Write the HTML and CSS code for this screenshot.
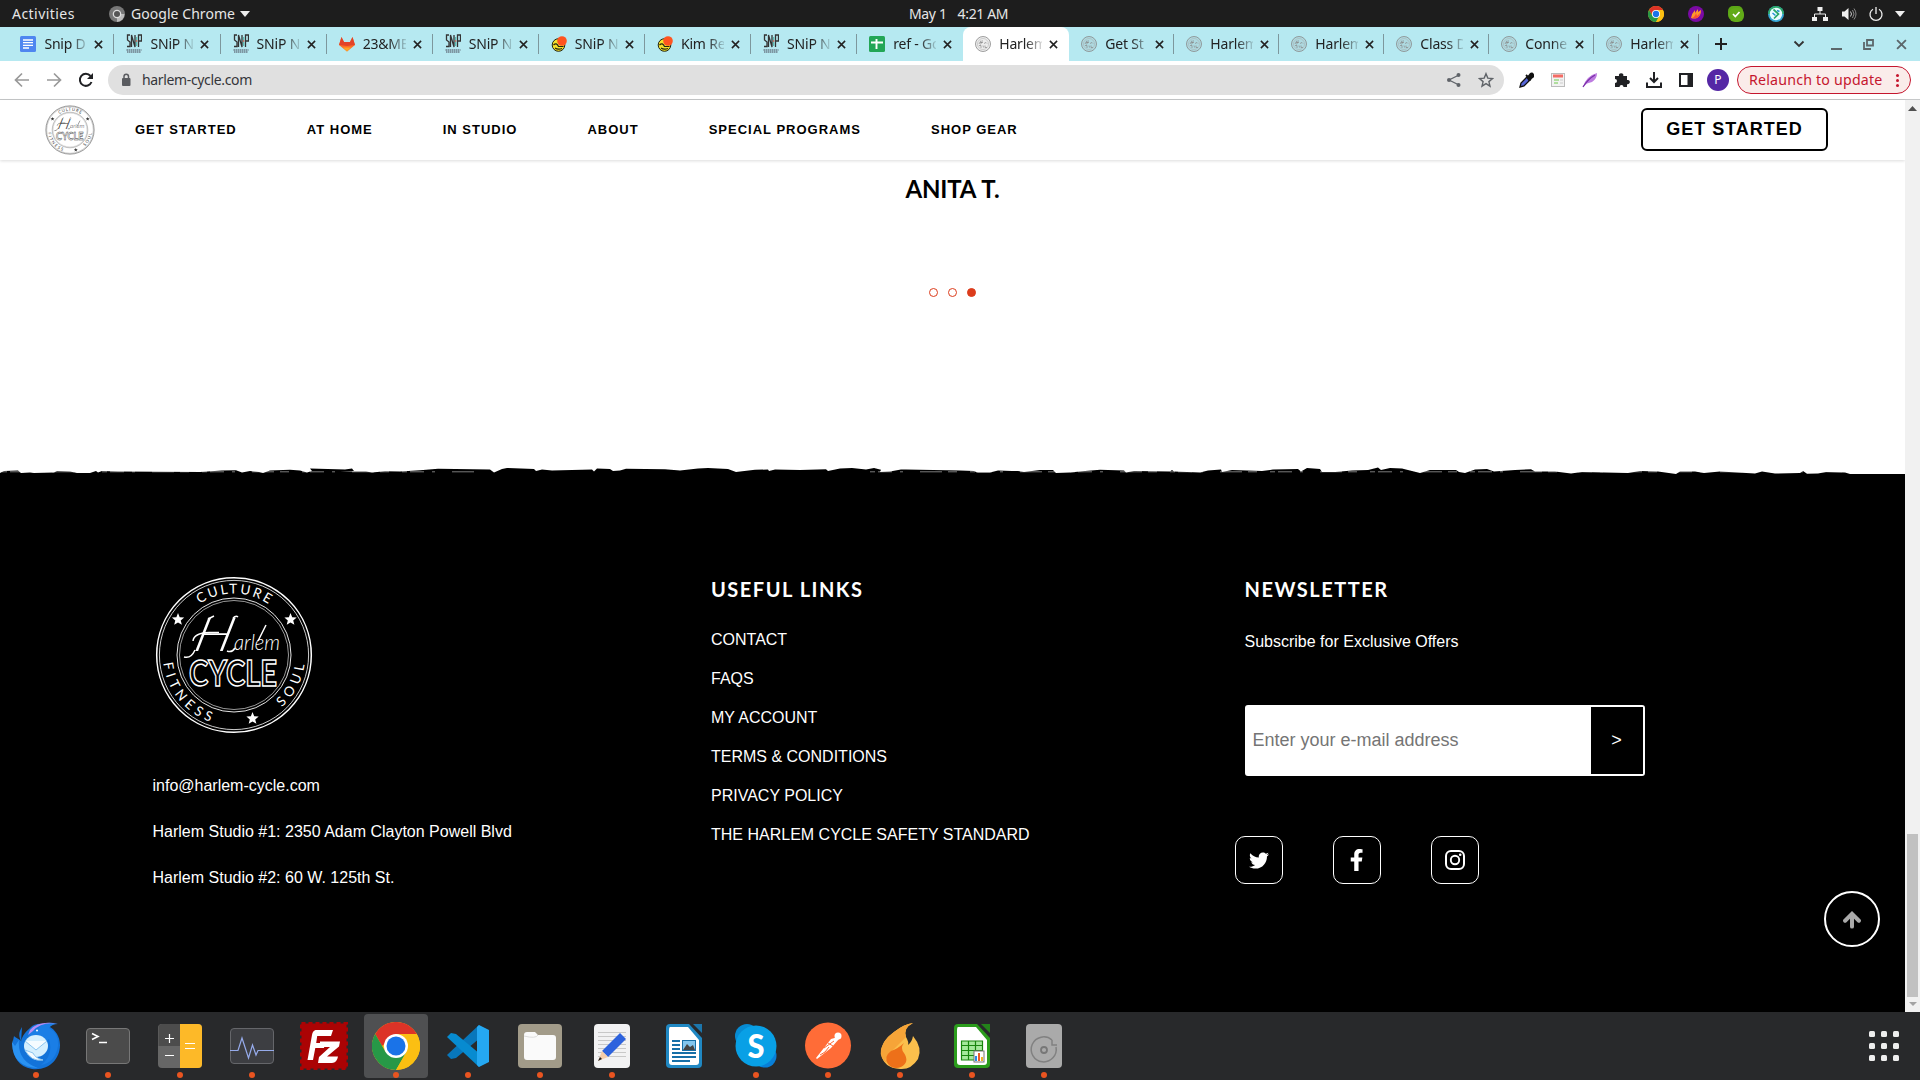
FILE: index.html
```html
<!DOCTYPE html>
<html lang="en">
<head>
<meta charset="utf-8">
<title>Harlem Cycle</title>
<link rel="stylesheet" href="styles.css">
</head>
<body>
<svg class="defs" width="0" height="0" aria-hidden="true">
  <defs>
    <symbol id="logo" viewBox="0 0 160 160">
      <g fill="none" stroke="currentColor">
        <circle cx="80" cy="80" r="77.3" stroke-width="1.5"/>
        <circle cx="80" cy="80" r="74.6" stroke-width=".8"/>
        <circle cx="80" cy="80" r="57" stroke-width=".9"/>
        <circle cx="80" cy="80" r="54.5" stroke-width=".6"/>
      </g>
      <path id="arc-top" d="M18.500 80A61.500 61.500 0 0 1 141.500 80" fill="none"/>
      <path id="arc-low" d="M9 80A71 71 0 0 0 151 80" fill="none"/>
      <g fill="currentColor" font-family="Lato, sans-serif" font-weight="400" font-size="13.500">
        <text textLength="73" lengthAdjust="spacing"><textPath href="#arc-top" startOffset="60">CULTURE</textPath></text>
        <text textLength="79" lengthAdjust="spacing"><textPath href="#arc-low" startOffset="8">FITNESS</textPath></text>
        <text textLength="49" lengthAdjust="spacing"><textPath href="#arc-low" startOffset="164">SOUL</textPath></text>
      </g>
      <g fill="currentColor">
        <path id="star" d="M24 38l1.700 4.200 4.500.300-3.500 2.900 1.200 4.400-3.900-2.400-3.800 2.400 1.100-4.400-3.400-2.900 4.500-.300z"/>
        <use href="#star" x="112.500" y="0"/>
        <use href="#star" x="74.500" y="99"/>
      </g>
      <g fill="currentColor" font-family="Lato, sans-serif" font-style="italic">
        <g transform="translate(38 76) skewX(-14)"><text font-size="47" font-weight="300" textLength="38" lengthAdjust="spacingAndGlyphs">H</text></g>
        <text x="80" y="75" font-size="21" font-weight="300" textLength="46" lengthAdjust="spacingAndGlyphs">arlem</text>
      </g>
      <path d="M39 66q1-8 16-8.500h10M41 75q-4 9-11 7M54 44l6-3M73 76q5 2 8-3M79 43q3-3 5-1M104 66L112 50" fill="none" stroke="currentColor" stroke-width="1.500"/>
      <text x="35" y="111" font-family="Lato, sans-serif" font-weight="700" font-size="36" textLength="88" lengthAdjust="spacingAndGlyphs" fill="none" stroke="currentColor" stroke-width="1.500">CYCLE</text>
    </symbol>
    <symbol id="hc" viewBox="0 0 16 16">
      <circle cx="8" cy="8" r="7.500" fill="#888" fill-opacity=".15" stroke="#888" stroke-width=".800"/>
      <circle cx="8" cy="8" r="5.500" fill="none" stroke="#aaa" stroke-width=".500"/>
      <path d="M4 8l2-3.500M5.500 8.500l2-4M5 6.500h3M9 7.500l2-1 1 1M4 9.500h2v2.500M8 9.500l.500 2M10 9.500v2h2" stroke="#888" stroke-width=".700" fill="none"/>
    </symbol>
    <symbol id="snip" viewBox="0 0 16 20">
      <path d="M4 1H1.500v5L4 8v4.500H1M5.500 13V1L9 13V1M12.500 13V1h3v6h-3" fill="none" stroke="#333" stroke-width="1.300"/>
      <path d="M10.700 3v9" stroke="#46b3a4" stroke-width="1"/><path d="M10.700 6v2" stroke="#d65" stroke-width="1"/>
      <path d="M.500 16h15M1 18h14" stroke="#445" stroke-width="1.100" stroke-dasharray="1.500 .500"/>
    </symbol>
    <symbol id="face" viewBox="0 0 16 16">
      <circle cx="7.500" cy="9" r="6.300" fill="#f4e22b" stroke="#221" stroke-width="1"/>
      <path d="M2.500 9q3-3 5 1.500h5M4 12q3 2 7 .500" fill="none" stroke="#221" stroke-width="1.200"/>
      <circle cx="11" cy="5" r="4.800" fill="#ff5420"/>
    </symbol>
    <symbol id="x" viewBox="0 0 10 10"><path d="M1 1l8 8M9 1L1 9" stroke="currentColor" stroke-width="1.700"/></symbol>
    <symbol id="chrome" viewBox="0 0 48 48">
      <circle cx="24" cy="24" r="24" fill="#fbbf12"/>
      <path d="M24 12H44.800A24 24 0 0 0 3.200 12L10 24z" fill="#dc3327"/>
      <path d="M3.200 12A24 24 0 0 0 24 48L34.400 30 24 34 13.600 30z" fill="#279847"/>
      <path d="M24 48A24 24 0 0 0 44.800 12H24l10.400 18z" fill="#fbbf12"/>
      <circle cx="24" cy="24" r="12" fill="#fff"/><circle cx="24" cy="24" r="9.500" fill="#1a73e8"/>
    </symbol>
  </defs>
</svg>

<div class="desktop">
  <header class="topbar">
    <div class="topbar-left">
      <span class="activities">Activities</span>
      <svg class="app-icon" viewBox="0 0 16 16"><circle cx="8" cy="8" r="8" fill="#777"/><path d="M8 8h7.500A8 8 0 0 1 8 16z" fill="#bbb"/><circle cx="8" cy="8" r="4.300" fill="#ddd"/><circle cx="8" cy="8" r="3" fill="#555"/></svg>
      <span class="app-name">Google Chrome</span>
      <svg class="caret" viewBox="0 0 10 6"><path d="M0 0h10L5 6z" fill="#eee"/></svg>
    </div>
    <div class="clock"><span>May 1</span><span>4:21 AM</span></div>
    <div class="tray">
      <svg class="tray-app" viewBox="0 0 16 16"><use href="#chrome"/></svg>
      <svg class="tray-app" viewBox="0 0 16 16"><circle cx="8" cy="8" r="8" fill="#7b0aa5"/><path d="M3 12q1-5 4-8l0 3 3-4v3l3-2q0 6-4 8-3 1-6 0z" fill="#ff9b2b"/><path d="M4 12q3-1 4-5l1 3 3-3q-1 5-4 5z" fill="#ff4b38"/></svg>
      <svg class="tray-app" viewBox="0 0 16 16"><rect width="15" height="14" rx="5" fill="#5ba616"/><rect x="1" y="2" width="15" height="14" rx="6" fill="#62ab18"/><path d="M5 8l2.300 2.500L11.500 6" fill="none" stroke="#fff" stroke-width="1.700"/></svg>
      <svg class="tray-app" viewBox="0 0 16 16"><circle cx="8" cy="8" r="8" fill="#35a6d6"/><path d="M0 8a8 8 0 0 1 16 0z" fill="#2aa768"/><circle cx="8" cy="8" r="6.200" fill="#e9fbff"/><path d="M5.500 3.500l5 4.500-4.500 4.500" stroke="#2aa768" stroke-width="1.700" fill="none"/><path d="M4.500 7l3 2.500M9 4.500l2.500 1" stroke="#2591d5" stroke-width="1.500" fill="none"/></svg>
      <svg class="net" viewBox="0 0 16 16"><path d="M5.500 1h5v4h-5zM0 11h5v4H0zM11 11h5v4h-5z" fill="#eee"/><path d="M8 4v4M2.500 11V8h11v3" fill="none" stroke="#eee"/></svg>
      <svg class="vol" viewBox="0 0 16 16"><path d="M1 5.500h2.500L7.500 2v12l-4-3.500H1z" fill="#eee"/><path d="M9.500 5.500q2 2.500 0 5" fill="none" stroke="#ccc"/><path d="M11.500 4q3 4 0 8M13 2.500q4 5.500 0 11" fill="none" stroke="#888"/></svg>
      <svg class="power" viewBox="0 0 16 16"><path d="M5 3.200a6 6 0 1 0 6 0M8 1v7" fill="none" stroke="#eee" stroke-width="1.300"/></svg>
      <svg class="caret" viewBox="0 0 10 6"><path d="M0 0h10L5 6z" fill="#eee"/></svg>
    </div>
  </header>

  <div class="tabstrip">
    <div class="tab"><svg class="fav" viewBox="0 0 16 16"><rect width="16" height="16" rx="1.500" fill="#4f86f0"/><path d="M3 4h10M3 6.700h10M3 9.400h10M3 12h6" stroke="#fff" stroke-width="1.300"/></svg><span class="label">Snip D</span><svg class="close"><use href="#x"/></svg></div>
    <div class="tab"><svg class="fav tall"><use href="#snip"/></svg><span class="label">SNiP N</span><svg class="close"><use href="#x"/></svg></div>
    <div class="tab"><svg class="fav tall"><use href="#snip"/></svg><span class="label">SNiP N</span><svg class="close"><use href="#x"/></svg></div>
    <div class="tab"><svg class="fav" viewBox="0 0 16 16"><path d="M0 9L2.500 1l2.500 5h6l2.500-5L16 9l-8 6.500z" fill="#fc6d26"/><path d="M0 9L2.500 1l2.500 5h6l2.500-5L16 9 8 10z" fill="#e24329"/><path d="M4 11.500h8l-4 4z" fill="#fca326"/></svg><span class="label">23&amp;ME</span><svg class="close"><use href="#x"/></svg></div>
    <div class="tab"><svg class="fav tall"><use href="#snip"/></svg><span class="label">SNiP N</span><svg class="close"><use href="#x"/></svg></div>
    <div class="tab"><svg class="fav"><use href="#face"/></svg><span class="label">SNiP N</span><svg class="close"><use href="#x"/></svg></div>
    <div class="tab"><svg class="fav"><use href="#face"/></svg><span class="label">Kim Re</span><svg class="close"><use href="#x"/></svg></div>
    <div class="tab"><svg class="fav tall"><use href="#snip"/></svg><span class="label">SNiP N</span><svg class="close"><use href="#x"/></svg></div>
    <div class="tab before-active"><svg class="fav" viewBox="0 0 16 16"><rect width="16" height="16" rx="1.500" fill="#23a656"/><path d="M2 6.500h12M7.500 3v10" stroke="#fff" stroke-width="1.900"/></svg><span class="label">ref - Go</span><svg class="close"><use href="#x"/></svg></div>
    <div class="tab active"><svg class="fav"><use href="#hc"/></svg><span class="label">Harlem</span><svg class="close"><use href="#x"/></svg></div>
    <div class="tab narrow"><svg class="fav"><use href="#hc"/></svg><span class="label">Get St</span><svg class="close"><use href="#x"/></svg></div>
    <div class="tab narrow"><svg class="fav"><use href="#hc"/></svg><span class="label">Harlem</span><svg class="close"><use href="#x"/></svg></div>
    <div class="tab narrow"><svg class="fav"><use href="#hc"/></svg><span class="label">Harlem</span><svg class="close"><use href="#x"/></svg></div>
    <div class="tab narrow"><svg class="fav"><use href="#hc"/></svg><span class="label">Class D</span><svg class="close"><use href="#x"/></svg></div>
    <div class="tab narrow"><svg class="fav"><use href="#hc"/></svg><span class="label">Conne</span><svg class="close"><use href="#x"/></svg></div>
    <div class="tab narrow"><svg class="fav"><use href="#hc"/></svg><span class="label">Harlem</span><svg class="close"><use href="#x"/></svg></div>
    <svg class="newtab" viewBox="0 0 12 12"><path d="M6 0v12M0 6h12" stroke="#222" stroke-width="2"/></svg>
    <div class="winctl">
      <svg width="12" height="8" viewBox="0 0 12 8"><path d="M1.500 1.500L6 6l4.500-4.500" fill="none" stroke="#333" stroke-width="1.800"/></svg>
      <svg width="11" height="12" viewBox="0 0 11 12"><path d="M0 11h11" stroke="#5c676b" stroke-width="2"/></svg>
      <svg width="11" height="11" viewBox="0 0 11 11"><path d="M4 1h6v5.500H4zM1 3v7h7" fill="none" stroke="#5c676b" stroke-width="1.800"/></svg>
      <svg width="11" height="11" viewBox="0 0 10 10" color="#5c676b"><use href="#x"/></svg>
    </div>
  </div>

  <div class="toolbar">
    <div class="navbtns">
      <svg viewBox="0 0 16 16"><path d="M15 8H2M8 1.500L1.500 8 8 14.500" fill="none" stroke="#999" stroke-width="1.700"/></svg>
      <svg viewBox="0 0 16 16"><path d="M1 8h13M8 1.500L14.500 8 8 14.500" fill="none" stroke="#999" stroke-width="1.700"/></svg>
      <svg viewBox="0 0 16 16"><path d="M13.500 10A6 6 0 1 1 12.500 4" fill="none" stroke="#202124" stroke-width="2"/><path d="M15 1v6H9z" fill="#202124"/></svg>
    </div>
    <div class="omnibox">
      <svg class="lock" viewBox="0 0 10 14"><rect x="1" y="5" width="8.500" height="8" rx="1" fill="#5a5c60"/><path d="M3 6V3.500a2.200 2.200 0 0 1 4.500 0V6" fill="none" stroke="#5a5c60" stroke-width="1.500"/></svg>
      <span class="url">harlem-cycle.com</span>
      <svg class="omni-icon" viewBox="0 0 16 16"><path d="M13 3L3 8l10 5" fill="none" stroke="#5f6368" stroke-width="1.300"/><circle cx="12.500" cy="3" r="2" fill="#5f6368"/><circle cx="3" cy="8" r="2" fill="#5f6368"/><circle cx="12.500" cy="13" r="2" fill="#5f6368"/></svg>
      <svg class="omni-icon" viewBox="0 0 16 16"><path d="M8 1.700l1.800 4.400 4.700.400-3.600 3.100 1.100 4.600L8 11.700l-4 2.500 1.100-4.600L1.500 6.500l4.700-.400z" fill="none" stroke="#5f6368" stroke-width="1.400"/></svg>
    </div>
    <div class="exts">
      <svg viewBox="0 0 16 16"><path d="M2 15l1-4 6-6 3 3-6 6z" fill="#5666d8" stroke="#111" stroke-width="1.300"/><path d="M8 3l5 5M9.500 5.500L12 2.500q2-2 3 0t-1 3l-3 2.500z" fill="#111" stroke="#111" stroke-width="1.800"/></svg>
      <svg viewBox="0 0 16 16"><rect x="1.500" y="1.500" width="13" height="13" fill="#f2f2f2" stroke="#bbb"/><path d="M3 4h10" stroke="#f36c65" stroke-width="3"/><path d="M4 8h5M4 11h4" stroke="#9bd883" stroke-width="1.300"/><path d="M10 8h3M10 11h3" stroke="#ccc"/></svg>
      <svg viewBox="0 0 16 16"><path d="M1 15Q4 4 15 1q0 6-5 9l-5 1.500z" fill="#bd7ce0"/><path d="M1 15Q6 7 13 3" fill="none" stroke="#7b2fa8" stroke-width="1.300"/></svg>
      <svg viewBox="0 0 16 16"><path d="M1 4h4a2.200 2.200 0 1 1 4.300 0H13v4a2.200 2.200 0 1 1 0 4.200V15H9.500a2 2 0 0 0-4 0H1v-4a2 2 0 0 0 0-4z" fill="#202124"/></svg>
      <svg viewBox="0 0 16 16"><path d="M8 0v9M4 6l4 4 4-4M1 10.500V15h14v-4.500" fill="none" stroke="#202124" stroke-width="2"/></svg>
      <svg viewBox="0 0 16 16"><path d="M2 2h12v12H2z" fill="none" stroke="#202124" stroke-width="2"/><path d="M9.500 2h4v12h-4z" fill="#202124"/></svg>
      <span class="avatar">P</span>
    </div>
    <div class="relaunch"><span>Relaunch to update</span><i class="kebab"></i></div>
  </div>

  <div class="viewport">
    <div class="page">
      <nav class="site-nav">
        <svg class="nav-logo"><use href="#logo"/></svg>
        <div class="nav-links"><a>GET STARTED</a><a>AT HOME</a><a>IN STUDIO</a><a>ABOUT</a><a>SPECIAL PROGRAMS</a><a>SHOP GEAR</a></div>
        <a class="cta">GET STARTED</a>
      </nav>
      <section class="testimonial">
        <h3>ANITA T.</h3>
        <div class="dots"><i></i><i></i><i class="on"></i></div>
      </section>
      <svg class="torn" viewBox="0 0 1905 10" preserveAspectRatio="none"><path d="M0 10V7L4 5 18 4.500 21 7 30 6.500 34 7 54 6.500 57 5 70 5.500 77 7 90 7 96 5 98 6.500 102 5 118 5.500 200 6 222 4.500 236 4.200 242 6.500 250 5 259 6 263 7 270 4.500 290 3.800 300 4.500 307 6.500 312 5 310 2.500 345 3.500 352 2.500 354 5 340 5.500 366 5.500 372 6.500 385 5.300 400 5.500 420 4.200 438 2.800 490 3.500 494 6.500 502 3 507 2 534 3 536 5 542 3.500 552 4.500 592 3.500 594 5.500 597 2.500 610 3 613 5 620 4.500 626 2.700 665 3.200 680 4.500 698 2.500 708 2 728 3 736 6 755 3.800 768 3.500 769 5 775 3.500 800 4 826 3.300 828 5 840 2.500 852 2 866 3.500 874 2 881 3.700 880 6 890 5.500 901 3.500 906 3.500 960 4.500 974 5 977 6.500 990 6.500 998 4.500 1012 5 1018 5 1024 6 1040 4 1053 4 1056 7 1070 6.500 1085 5 1100 3.800 1124 4.500 1126 6.500 1134 5 1170 5.500 1172 4 1174 5.500 1200 6.500 1208 4.500 1221 3.500 1222 6 1232 4 1262 5 1273 3.500 1298 3 1301 5.500 1307 2 1320 3 1322 6 1335 6 1352 4.500 1368 4 1378 1.500 1381 4 1390 2 1402 2.500 1408 4 1420 7 1430 4 1456 4 1459 6 1465 7 1475 3.500 1487 3 1494 5.500 1515 4 1531 3.300 1535 5.500 1555 5.500 1571 7.500 1582 6 1628 7 1640 5 1658 5.500 1676 8 1680 5.500 1695 5.500 1704 7 1720 5.500 1755 7.500 1762 5.500 1775 7.500 1800 7 1803 5 1807 7.800 1818 7.600 1826 6 1845 6.500 1850 8 1905 8V10z"/><path d="M2 5.800H480M870 5.800H1850" fill="none" stroke="#fff" stroke-opacity=".6" stroke-width=".8" stroke-dasharray="5 3 14 8 3 17 22 6 9 13"/></svg>
      <footer class="site-footer">
        <div class="col about">
          <svg class="foot-logo"><use href="#logo"/></svg>
          <p>info@harlem-cycle.com</p>
          <p>Harlem Studio #1: 2350 Adam Clayton Powell Blvd</p>
          <p>Harlem Studio #2: 60 W. 125th St.</p>
        </div>
        <div class="col links">
          <h4>USEFUL LINKS</h4>
          <a>CONTACT</a><a>FAQS</a><a>MY ACCOUNT</a><a>TERMS &amp; CONDITIONS</a><a>PRIVACY POLICY</a><a>THE HARLEM CYCLE SAFETY STANDARD</a>
        </div>
        <div class="col news">
          <h4>NEWSLETTER</h4>
          <p>Subscribe for Exclusive Offers</p>
          <form class="signup"><input type="text" placeholder="Enter your e-mail address"><button type="button">&gt;</button></form>
          <div class="social">
            <a><svg width="20" height="17" viewBox="0 48 512 416"><path d="M459.370 151.716c.325 4.548.325 9.097.325 13.645 0 138.720-105.583 298.558-298.558 298.558-59.452 0-114.680-17.219-161.137-47.106 8.447.974 16.568 1.299 25.340 1.299 49.055 0 94.213-16.568 130.274-44.832-46.132-.975-84.792-31.188-98.112-72.772 6.498.974 12.995 1.624 19.818 1.624 9.421 0 18.843-1.300 27.614-3.573-48.081-9.747-84.143-51.980-84.143-102.985v-1.299c13.969 7.797 30.214 12.670 47.431 13.319-28.264-18.843-46.781-51.005-46.781-87.391 0-19.492 5.197-37.360 14.294-52.954 51.655 63.675 129.300 105.258 216.365 109.807-1.624-7.797-2.599-15.918-2.599-24.040 0-57.828 46.782-104.934 104.934-104.934 30.213 0 57.502 12.670 76.670 33.137 23.715-4.548 46.456-13.320 66.599-25.340-7.798 24.366-24.366 44.833-46.132 57.827 21.117-2.273 41.584-8.122 60.426-16.243-14.292 20.791-32.161 39.308-52.628 54.253z" fill="#fff"/></svg></a>
            <a><svg width="13" height="22" viewBox="22 0 270 512"><path d="M279.140 288l14.220-92.660h-88.910v-60.130c0-25.350 12.420-50.060 52.240-50.060h40.420V6.260S260.430 0 225.360 0c-73.220 0-121.080 44.380-121.080 124.720v70.620H22.890V288h81.390v224h100.170V288z" fill="#fff"/></svg></a>
            <a><svg width="20" height="20" viewBox="0 0 20 20"><rect x="1" y="1" width="18" height="18" rx="5" fill="none" stroke="#fff" stroke-width="2"/><circle cx="10" cy="10" r="4.200" fill="none" stroke="#fff" stroke-width="1.900"/><circle cx="15.200" cy="4.800" r="1.300" fill="#fff"/></svg></a>
          </div>
        </div>
        <a class="to-top"><svg width="18" height="18" viewBox="0 0 19 18"><path d="M9.500 16V3M2.200 9.800L9.500 2.500l7.300 7.300" fill="none" stroke="#aaa" stroke-width="4.200" stroke-linecap="round"/></svg></a>
      </footer>
    </div>
    <div class="scrollbar">
      <svg width="9" height="5" viewBox="0 0 9 5"><path d="M0 5h9L4.500 0z" fill="#505050"/></svg>
      <i class="thumb"></i>
      <svg width="8" height="4" viewBox="0 0 8 4"><path d="M0 0h8L4 4z" fill="#a3a3a3"/></svg>
    </div>
  </div>

  <div class="dock">
    <div class="app run"><svg viewBox="0 0 48 48"><path d="M10 5c-4 6-3 10-1 14-3-3-5-3-7-5-4 14 1 30 18 33 17 2 28-10 28-24 0-9-5-15-10-18-4-4-15-5-20 1-6 5-9 10-9 15z" fill="#1373d9"/><path d="M0 18q-1 27 26 28Q5 39 7 18l-4 6q-3-3-3-6z" fill="#2a92f2"/><path d="M26 7Q31-2 46 2q-6 0-9 4 10 5 9 18-3 17-17 19 13-10 8-26-5 5-14 4l-7-6q2-6 10-8z" fill="#1a7ee6"/><path d="M18 8Q27-2 46 2 30-1 21 9l-5 4z" fill="#b48df5"/><ellipse cx="24" cy="24" rx="12" ry="11" fill="#d5effe"/><path d="M13 19l11 9 11-9M13 28q6 12 18 10-8-2-10-7z" fill="#f5fbff" stroke="#8cc5ef" stroke-width="1"/><circle cx="25" cy="8.500" r="1" fill="#fff"/></svg></div>
    <div class="app run"><svg viewBox="0 0 48 48"><rect x="2.500" y="6.500" width="43" height="35" rx="3.500" fill="#4b4b4b" stroke="#777"/><path d="M8 11.500l6 3-6 3M15 20.500h8" fill="none" stroke="#fff" stroke-width="1.600"/></svg></div>
    <div class="app run"><svg viewBox="0 0 48 48"><rect x="2" y="2" width="44" height="44" rx="4" fill="#666"/><path d="M2.500 24V6a4 4 0 0 1 4-4H24v22z" fill="#4c4c4c"/><path d="M24 2h18a4 4 0 0 1 4 4v36a4 4 0 0 1-4 4H24z" fill="#fdb928"/><path d="M9 16.500h9M13.500 12v9M9 33.500h9M29 21.500h10M29 26.500h10" stroke="#fff" stroke-width="1.200"/></svg></div>
    <div class="app run"><svg viewBox="0 0 48 48"><rect x="2.500" y="6.500" width="43" height="35" rx="3.500" fill="#3d3e42" stroke="#65666a"/><path d="M2 28.500h8L14 16l6.500 20 4-13L28 33l2-4.500h16" fill="none" stroke="#96abeb" stroke-width="1.200"/></svg></div>
    <div class="app"><svg viewBox="0 0 48 48"><rect x="1.500" y="1.500" width="45" height="45" fill="#ab0304" stroke="#ab0304" stroke-width="3" stroke-dasharray="4 3"/><path d="M33 8H15.500q-3 1-3.500 5L7.500 38H13l2.300-12H24l1-5h-8.800l1-7H31z" fill="#fff"/><path d="M20 19.500h20l-1 5-12 10h11q-1 6-6 6.500H18l1-6 11-10H20z" fill="#fff"/></svg></div>
    <div class="app run current"><svg viewBox="0 0 48 48"><use href="#chrome"/></svg></div>
    <div class="app run"><svg viewBox="0 0 48 48"><path d="M35 3L3 33l4 4 5-1 24-20z" fill="#0877bb"/><path d="M35 45L3 15l4-4 5 1 24 20z" fill="#078bd0"/><path d="M35 3l10 5v32l-10 5-2-2V5z" fill="#25a8f2"/></svg></div>
    <div class="app run"><svg viewBox="0 0 48 48"><rect x="2" y="2" width="44" height="44" rx="4" fill="#a29b89"/><path d="M8 13q0-3 3-3h8l3 3h15q3 0 3 3v19q0 3-3 3H11q-3 0-3-3z" fill="#fafafa"/><path d="M8 14q12 3 14-1" fill="none" stroke="#ddd"/></svg></div>
    <div class="app run"><svg viewBox="0 0 48 48"><rect x="6" y="2" width="36" height="44" rx="4" fill="#f2f2f3"/><path d="M10 10.500h28M10 14.500h28M10 18.500h28M10 22.500h28M10 26.500h28M10 30.500h28M10 34.500h28" stroke="#c8c8c8"/><path d="M14 29L32 11l6 6-18 18z" fill="#2d62dd"/><path d="M14 29l6 6-10 4z" fill="#f5cdaa"/><path d="M12 35l-2 4 4-2z" fill="#222"/></svg></div>
    <div class="app"><svg viewBox="0 0 48 48"><path d="M10 2h19l13 14v26q0 4-4 4H10q-4 0-4-4V6q0-4 4-4z" fill="#2088c3"/><path d="M10 5h18l11 13v22q0 3-3 3H12q-3 0-3-3V8q0-3 1-3z" fill="#fff"/><path d="M33 2h9v9z" fill="#1c76ac"/><path d="M12 19h8M12 23h8M12 27h8M12 31h24M12 35h24M12 39h18" stroke="#176fa7" stroke-width="1.800"/><rect x="22.500" y="18.500" width="13" height="10" fill="#83c6ee" stroke="#176fa7"/><path d="M23 28l4-6 3 3 3-2 2 5z" fill="#444"/></svg></div>
    <div class="app run"><svg viewBox="0 0 48 48"><circle cx="15" cy="14" r="12" fill="#078bd3"/><circle cx="33" cy="34" r="11.500" fill="#087fd8"/><circle cx="24" cy="24" r="20.500" fill="#08a0e6"/><text x="15.500" y="36" font-family="Lato, sans-serif" font-weight="900" font-size="33" textLength="17" lengthAdjust="spacingAndGlyphs" fill="#fff">S</text></svg></div>
    <div class="app run"><svg viewBox="0 0 48 48"><circle cx="24" cy="23.500" r="23" fill="#ff6c37"/><path d="M12 36L27 17l7-2 1 2-8 9-14 11z" fill="#fff"/><circle cx="34" cy="14" r="3.500" fill="#fff"/><path d="M20 26l10-7M16 33l5-3 4-5M24 21l5 3" stroke="#ff6c37" fill="none"/></svg></div>
    <div class="app run"><svg viewBox="0 0 48 48"><path d="M37 1Q27 6 30 15q3 5 2 8 4-3 5-9 10 12 5 23-7 11-18 10Q7 46 5 31 5 19 18 10 28 2 37 1z" fill="#fbbf4c"/><path d="M37 1Q27 6 30 15L16 29Q5 38 13 43 3 37 5 27q3-10 13-17Q28 2 37 1z" fill="#f6a438"/><path d="M28 21q-4 5 0 10 6 9-3 14-8 3-13-3-5-7 3-13 8-3 13-8z" fill="#ed7019"/></svg></div>
    <div class="app run"><svg viewBox="0 0 48 48"><path d="M10 2h19l13 14v26q0 4-4 4H10q-4 0-4-4V6q0-4 4-4z" fill="#2b9c1c"/><path d="M10 5h18l11 13v22q0 3-3 3H12q-3 0-3-3V8q0-3 1-3z" fill="#fff"/><path d="M33 2h9v9z" fill="#23831a"/><path d="M13.500 19h21v19h-21zM13 23.500h22M13 28.500h22M13 33.500h22M20.500 19v19M27.500 19v19" fill="#a4e99b" stroke="#18850e" stroke-width="1.200"/><rect x="26" y="29" width="10" height="11" fill="#fff" stroke="#777"/><path d="M28 39v-5" stroke="#2788e8" stroke-width="2"/><path d="M31 39v-8" stroke="#e95b28" stroke-width="2"/><path d="M34 39v-4" stroke="#eeb52a" stroke-width="2"/></svg></div>
    <div class="app run"><svg viewBox="0 0 48 48"><rect x="6" y="2" width="36" height="44" rx="4" fill="#aaa"/><path d="M32 18a12.500 12.500 0 1 0 4 7M32 18v5h5" fill="none" stroke="#818181" stroke-width="1.500"/><circle cx="24" cy="28" r="3" fill="none" stroke="#777" stroke-width="1.800"/></svg></div>
    <div class="grid-btn"><i></i><i></i><i></i><i></i><i></i><i></i><i></i><i></i><i></i></div>
  </div>
</div>
</body>
</html>
```
FILE: styles.css
```css
* { box-sizing: border-box; }
body { margin: 0; font-family: "Noto Sans", sans-serif; }
svg { display: block; flex: none; }
.defs { position: absolute; }
h3, h4, p { margin: 0; }
.desktop { width: 1920px; height: 1080px; display: flex; flex-direction: column; overflow: hidden; background: #000; }

/* system bar */
.topbar { height: 27px; flex: none; background: #1d1d1d; color: #e6e6e6; display: grid; grid-template-columns: 1fr 102px 1fr; align-items: center; font-size: 14px; line-height: 26px; white-space: nowrap; }
.topbar-left { display: flex; align-items: center; padding-left: 12px; }
.activities { width: 97px; letter-spacing: .45px; }
.app-icon { width: 16px; height: 16px; margin-right: 6px; }
.app-name { width: 104px; letter-spacing: .05px; }
.caret { width: 10px; height: 6px; margin-left: 5px; }
.clock { display: flex; gap: 11px; letter-spacing: -.35px; }
.tray { display: flex; align-items: center; justify-content: flex-end; padding-right: 15px; }
.tray-app { width: 16px; height: 16px; margin-right: 24px; }
.net { width: 16px; height: 16px; margin: 0 13px 0 4px; }
.vol { width: 16px; height: 16px; margin-right: 11px; }
.power { width: 16px; height: 16px; margin-right: 6px; }

/* tabs */
.tabstrip { height: 34px; flex: none; background: #b6e9f1; display: flex; padding-left: 8.400px; }
.tab { width: 106.100px; flex: none; display: flex; align-items: center; padding-left: 12px; background: linear-gradient(#7d979d, #7d979d) right 0 top 7px / 1px 20px no-repeat; color: #222; }
.tab.narrow { width: 105px; }
.tab.before-active { background: none; }
.tab.active { background: #fff; border-radius: 8px 8px 0 0; }
.fav { width: 16px; height: 16px; margin-right: 8px; }
.fav.tall { height: 20px; }
.label { width: 43px; margin-right: 7px; overflow: hidden; white-space: nowrap; font-size: 14px; letter-spacing: -.2px; line-height: 30px; -webkit-mask-image: linear-gradient(90deg, #000 62%, rgba(0,0,0,.15)); mask-image: linear-gradient(90deg, #000 62%, rgba(0,0,0,.15)); }
.close { width: 9px; height: 9px; }
.newtab { width: 12px; height: 12px; align-self: center; margin-left: 16px; }
.winctl { flex: 1; display: flex; align-items: center; padding-left: 66px; }
.winctl svg + svg { margin-left: 26px; }
.winctl svg:nth-child(3) { margin-left: 21px; }
.winctl svg:nth-child(4) { margin-left: 22px; }

/* browser toolbar */
.toolbar { height: 39px; flex: none; background: #fff; border-bottom: 1px solid #c6c8c9; display: flex; align-items: center; }
.navbtns { width: 108px; display: flex; gap: 16px; padding-left: 14px; }
.navbtns svg { width: 16px; height: 16px; }
.omnibox { width: 1396px; height: 30px; border-radius: 15px; background: #e0e0e0; display: flex; align-items: center; padding: 0 10px 0 13px; }
.lock { width: 10px; height: 14px; margin-right: 11px; }
.url { flex: 1; font-size: 14px; line-height: 28px; color: #35363a; letter-spacing: -.35px; }
.omni-icon { width: 16px; height: 16px; }
.omni-icon + .omni-icon { margin-left: 16px; }
.exts { display: flex; align-items: center; gap: 16px; padding-left: 14px; }
.exts svg { width: 16px; height: 16px; }
.avatar { width: 22px; height: 22px; margin-left: -3px; border-radius: 50%; background: #5527a5; color: #fff; font-size: 12px; line-height: 22px; text-align: center; }
.relaunch { width: 174px; height: 28px; margin-left: 8px; border: 1px solid #c5162e; border-radius: 14px; background: #faecea; color: #c5162e; display: flex; align-items: center; padding: 0 11px; font-size: 14.200px; letter-spacing: .2px; white-space: nowrap; line-height: 24px; }
.relaunch span { width: 147px; }
.kebab { width: 3px; height: 3px; border-radius: 50%; background: #c5162e; box-shadow: 0 -5px #c5162e, 0 5px #c5162e; }

/* web page */
.viewport { height: 912px; flex: none; display: flex; background: #fff; }
.page { width: 1905px; display: flex; flex-direction: column; font-family: "Liberation Sans", Arial, sans-serif; }
.site-nav { height: 60px; flex: none; display: flex; align-items: center; padding: 0 77px 0 45px; box-shadow: 0 1px 3px rgba(0,0,0,.14); }
.nav-logo { width: 50px; height: 50px; color: #333; }
.nav-links { flex: 1; display: flex; gap: 70px; padding-left: 40px; font-weight: 700; font-size: 13px; letter-spacing: 1px; line-height: 18px; white-space: nowrap; }
.cta { width: 187px; height: 43px; margin-top: -1px; border: 2px solid #000; border-radius: 6px; font-weight: 700; font-size: 18px; letter-spacing: 1px; line-height: 38px; text-align: center; }
.testimonial { height: 306px; flex: none; display: flex; flex-direction: column; align-items: center; padding-top: 14px; }
.testimonial h3 { font: 700 24px/30px Lato, sans-serif; letter-spacing: -.2px; word-spacing: 1px; }
.dots { display: flex; gap: 10px; margin-top: 84px; }
.dots i { width: 9px; height: 9px; border: 1px solid #dc3c1c; border-radius: 50%; }
.dots .on { background: #dc3c1c; }
.torn { width: 1905px; height: 10px; }
.site-footer { flex: 1; background: #000; color: #fff; display: grid; grid-template-columns: 558.500px 533.500px 1fr; padding-left: 152.500px; position: relative; font-size: 16px; }
.about { padding-top: 99px; }
.foot-logo { width: 160px; height: 160px; margin: 0 0 37px 1.500px; }
.about p { line-height: 28px; margin-bottom: 18px; white-space: nowrap; }
h4 { font: 700 20px/28px Lato, sans-serif; letter-spacing: 1.500px; }
.links, .news { padding-top: 99px; }
.links { display: flex; flex-direction: column; }
.links h4 { margin-bottom: 17px; }
.links a { line-height: 39px; white-space: nowrap; }
.news p { margin-top: 26px; line-height: 26px; }
.signup { display: flex; width: 400px; height: 71px; margin-top: 50px; border: 2px solid #fff; border-radius: 3px; background: #fff; }
.signup input { flex: 1; min-width: 0; border: 0; padding: 0 6px; font: 18px "Liberation Sans", sans-serif; background: #fff; outline: 0; }
.signup input::placeholder { color: #757575; }
.signup button { width: 52px; border: 0; padding: 0; background: #000; color: #fff; font: 18px "Liberation Sans", sans-serif; }
.social { display: flex; gap: 50px; margin: 60px 0 0 -10px; }
.social a { width: 48px; height: 48px; border: 1px solid #fff; border-radius: 10px; display: flex; align-items: center; justify-content: center; }
.to-top { position: absolute; right: 25px; bottom: 65px; width: 56px; height: 56px; padding-top: 2px; border: 2px solid #fff; border-radius: 50%; display: flex; align-items: center; justify-content: center; }
.scrollbar { width: 15px; background: #f1f1f1; display: flex; flex-direction: column; align-items: center; padding: 6px 0 6px; }
.thumb { width: 11px; height: 163px; margin: auto 0 5px; background: #c1c1c1; }

/* dock */
.dock { flex: 1; background: #28292b; display: flex; padding-right: 19px; }
.app { width: 64px; height: 64px; margin: 2px 4px; padding-top: 8px; border-radius: 4px; display: flex; flex-direction: column; align-items: center; }
.app svg { width: 48px; height: 48px; }
.app.run::after { content: ""; width: 6px; height: 6px; margin-top: 2px; border-radius: 50%; background: #e95420; }
.app.current { background: #4f5052; }
.grid-btn { margin: 19px 0 0 auto; padding-right: 2px; display: grid; grid-template-columns: repeat(3, 6px); grid-auto-rows: 6px; gap: 6px; }
.grid-btn i { background: #eee; border-radius: 1.500px; }
```
